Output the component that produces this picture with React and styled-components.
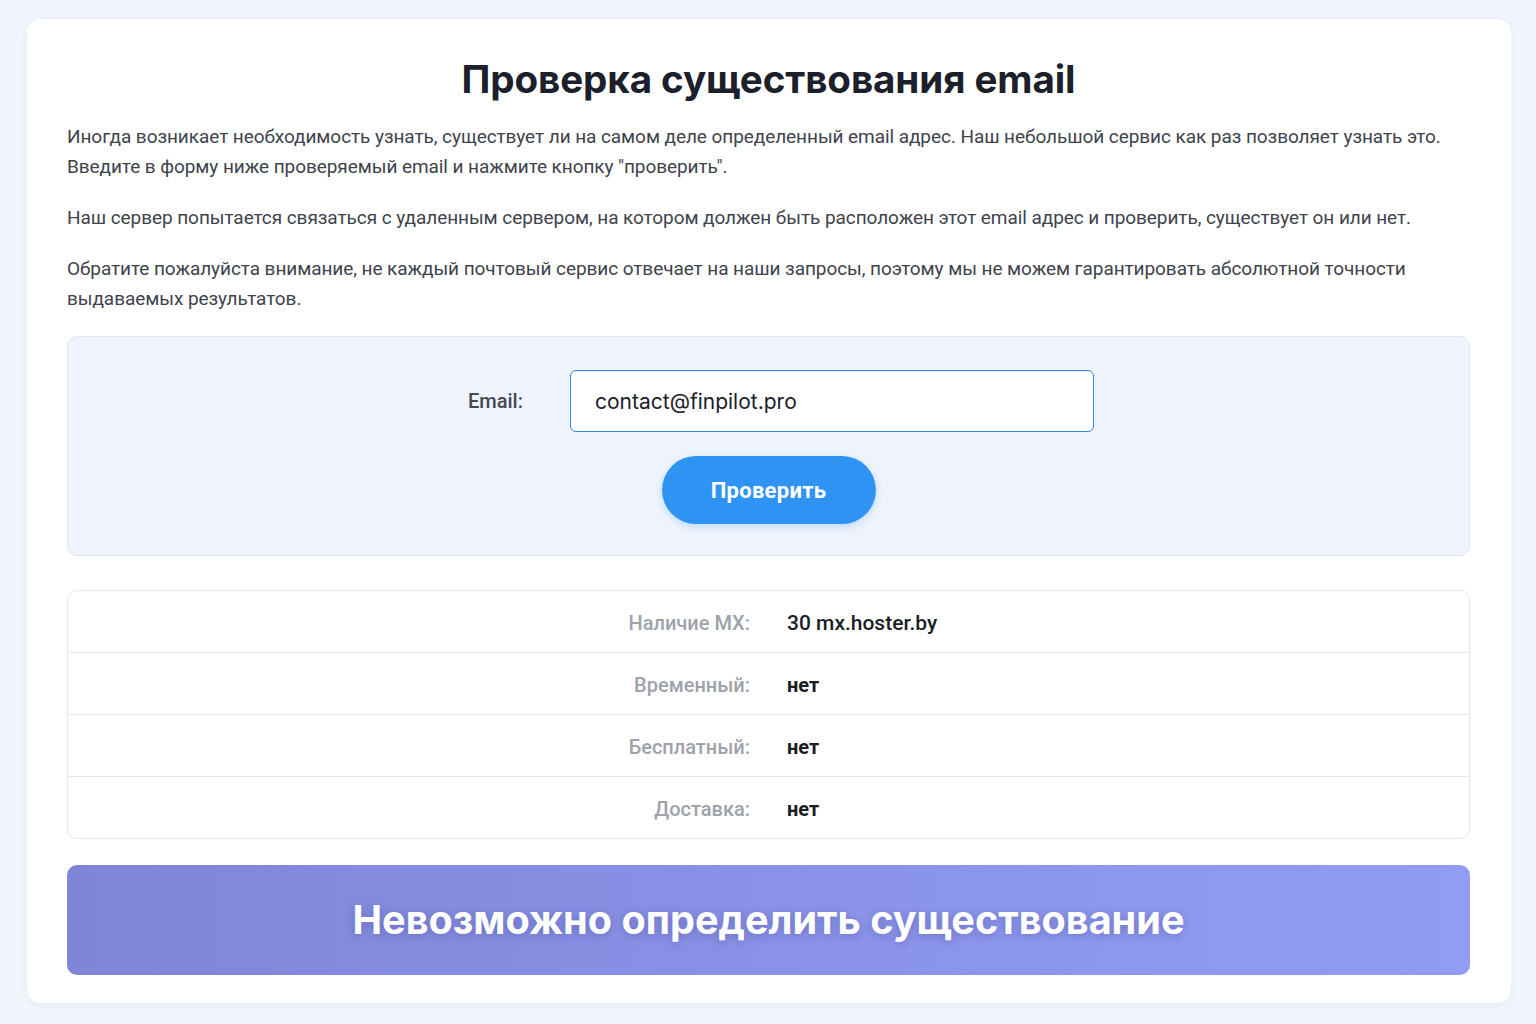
import React, { useState } from 'react';
import styled, { createGlobalStyle } from 'styled-components';

const GlobalStyle = createGlobalStyle`
  html, body {
    margin: 0;
    padding: 0;
    background: #f1f5fc;
  }
  body {
    font-family: Roboto, "Noto Sans", sans-serif;
    color: #3a3f48;
  }
`;

const Page = styled.div`
  padding: 19px 25px 22px 27px;
`;

const Card = styled.main`
  background: #ffffff;
  border-radius: 14px;
  box-shadow: 0 2px 10px rgba(40, 60, 110, 0.06);
  padding: 37px 41px 28px 40px;
`;

const Title = styled.h1`
  margin: 0 0 20px;
  text-align: center;
  font-family: Inter, "Open Sans", sans-serif;
  font-size: 38.6px;
  line-height: 46px;
  font-weight: 700;
  color: #1b202b;
  letter-spacing: -0.1px;
`;

const Text = styled.p`
  margin: 0 0 21px;
  font-size: 19px;
  line-height: 30px;
  color: #3e434c;
  letter-spacing: -0.07px;
`;

const FormBox = styled.form`
  margin-top: 22px;
  background: #eff4fc;
  border: 1px solid #dfe6f1;
  border-radius: 10px;
  padding: 33px 20px 31px;
  display: flex;
  flex-direction: column;
  align-items: center;
  gap: 24px;
`;

const FieldRow = styled.div`
  display: flex;
  align-items: center;
  gap: 47px;
`;

const Label = styled.label`
  width: 80px;
  text-align: right;
  font-size: 20px;
  font-weight: 500;
  color: #434852;
`;

const Input = styled.input`
  box-sizing: border-box;
  width: 524px;
  height: 62px;
  border: 1.5px solid #2e86ef;
  border-radius: 6px;
  background: #ffffff;
  padding: 0 24px;
  font-family: Inter, "Open Sans", sans-serif;
  font-size: 21px;
  color: #1c2029;
  outline: none;
`;

const Button = styled.button`
  width: 214px;
  height: 68px;
  border: none;
  border-radius: 34px;
  background: #2f93f4;
  color: #ffffff;
  font-family: Roboto, sans-serif;
  font-size: 22px;
  font-weight: 700;
  letter-spacing: 0.3px;
  cursor: pointer;
  box-shadow: 0 3px 8px rgba(47, 147, 244, 0.25);
`;

const Results = styled.div`
  margin-top: 34px;
  border: 1px solid #e4e9f1;
  border-radius: 10px;
  overflow: hidden;
`;

const Row = styled.div`
  display: grid;
  grid-template-columns: 1fr 1fr;
  column-gap: 37px;
  align-items: center;
  height: 59px;
  padding-top: 2px;
  border-top: ${p => (p.$first ? 'none' : '1.5px solid #e3e8f1')};
`;

const Key = styled.div`
  text-align: right;
  font-size: 20px;
  font-weight: 500;
  color: #9da2ab;
`;

const Value = styled.div`
  font-size: ${p => (p.$big ? '21px' : '20px')};
  font-weight: ${p => (p.$big ? 500 : 700)};
  color: #1a1d24;
`;

const Verdict = styled.div`
  margin-top: 26px;
  height: 110px;
  border-radius: 10px;
  background: linear-gradient(90deg, #7f86d8 0%, #8a93e8 55%, #909df3 100%);
  display: flex;
  align-items: center;
  justify-content: center;
  color: #ffffff;
  font-family: Inter, "Open Sans", sans-serif;
  font-size: 39.6px;
  font-weight: 700;
  text-shadow: 0 2px 8px rgba(70, 70, 150, 0.4);
`;

const rows = [
  { key: 'Наличие MX:', value: '30 mx.hoster.by', big: true },
  { key: 'Временный:', value: 'нет' },
  { key: 'Бесплатный:', value: 'нет' },
  { key: 'Доставка:', value: 'нет' },
];

export default function App() {
  const [email, setEmail] = useState('contact@finpilot.pro');

  return (
    <>
      <GlobalStyle />
      <Page>
        <Card>
          <Title>Проверка существования email</Title>
          <Text>
            Иногда возникает необходимость узнать, существует ли на самом деле определенный email адрес. Наш небольшой сервис как раз позволяет узнать это.
            <br />
            Введите в форму ниже проверяемый email и нажмите кнопку "проверить".
          </Text>
          <Text>
            Наш сервер попытается связаться с удаленным сервером, на котором должен быть расположен этот email адрес и проверить, существует он или нет.
          </Text>
          <Text>
            Обратите пожалуйста внимание, не каждый почтовый сервис отвечает на наши запросы, поэтому мы не можем гарантировать абсолютной точности выдаваемых результатов.
          </Text>

          <FormBox onSubmit={e => e.preventDefault()}>
            <FieldRow>
              <Label htmlFor="email">Email:</Label>
              <Input id="email" value={email} onChange={e => setEmail(e.target.value)} />
            </FieldRow>
            <Button type="submit">Проверить</Button>
          </FormBox>

          <Results>
            {rows.map((r, i) => (
              <Row key={r.key} $first={i === 0}>
                <Key>{r.key}</Key>
                <Value $big={r.big}>{r.value}</Value>
              </Row>
            ))}
          </Results>

          <Verdict>Невозможно определить существование</Verdict>
        </Card>
      </Page>
    </>
  );
}
